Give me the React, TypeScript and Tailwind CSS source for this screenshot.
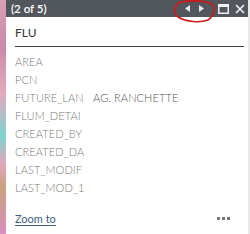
import React from "react";

const rows: [string, string][] = [
  ["AREA", ""],
  ["PCN", ""],
  ["FUTURE_LAN", "AG. RANCHETTE"],
  ["FLUM_DETAI", ""],
  ["CREATED_BY", ""],
  ["CREATED_DA", ""],
  ["LAST_MODIF", ""],
  ["LAST_MOD_1", ""],
];

export default function App() {
  return (
    <div className="relative flex w-[250px] h-[234px] overflow-hidden bg-[#e7b6c6]" style={{ fontFamily: "Lato, 'Open Sans', sans-serif" }}>
      <div className="w-[6px] h-full bg-[linear-gradient(180deg,#d9a0b6_0%,#c98aa8_20%,#e4a9bd_40%,#7fd4d0_58%,#e3a7bb_70%,#c9a27e_80%,#d98fc0_100%)]" />
      <div className="flex flex-col w-[242px] h-full bg-white">
        <div className="flex items-center h-[17px] bg-[#52565d] text-white pl-[5px] pr-[3px]">
          <span className="text-[11.5px] font-semibold leading-none">(2 of 5)</span>
          <div className="flex-1" />
          <svg width="9" height="9" viewBox="0 0 9 9" className="mr-[5px]"><path d="M7 1 L2 4.5 L7 8 Z" fill="#e8e8e8" /></svg>
          <svg width="9" height="9" viewBox="0 0 9 9" className="mr-[12px]"><path d="M2 1 L7 4.5 L2 8 Z" fill="#e8e8e8" /></svg>
          <svg width="11" height="10" viewBox="0 0 11 10" className="mr-[6px]"><rect x="0.75" y="0.75" width="9.5" height="8.5" fill="none" stroke="#f0f0f0" strokeWidth="1.5" /><rect x="0.5" y="0.5" width="10" height="2.5" fill="#f0f0f0" /></svg>
          <svg width="10" height="10" viewBox="0 0 10 10"><path d="M1 1 L9 9 M9 1 L1 9" stroke="#f0f0f0" strokeWidth="1.7" /></svg>
        </div>
        <div className="flex flex-col flex-1 pl-[9px] pr-[4px]">
          <div className="h-[30px] flex items-end pb-[7px] border-b border-[#3a3a3a] text-[12px] text-[#333] leading-none">FLU</div>
          <div className="flex flex-col pt-[5px]">
            {rows.map(([k, v]) => (
              <div key={k} className="flex h-[18px] items-center text-[11px] tracking-[0.1px] text-[#7a7a7a] font-light leading-none">
                <span className="w-[78px]">{k}</span>
                <span className="text-[#555]">{v}</span>
              </div>
            ))}
          </div>
          <div className="flex-1" />
          <div className="flex items-center justify-between h-[22px] mb-[5px] pr-[14px]">
            <span className="text-[11px] text-[#3d5d7d] underline underline-offset-2 leading-none">Zoom to</span>
            <span className="flex gap-[2px]">
              <span className="w-[3px] h-[3px] bg-[#777]" />
              <span className="w-[3px] h-[3px] bg-[#777]" />
              <span className="w-[3px] h-[3px] bg-[#777]" />
            </span>
          </div>
        </div>
      </div>
      <div className="w-[2px] h-full bg-[#e8e8e8]" />
      <svg className="absolute left-[172px] top-0" width="44" height="23" viewBox="0 0 44 23">
        <path d="M6 3 C 14 0, 32 0, 40 4 C 44 8, 42 16, 36 20 C 28 23, 14 22, 6 17 C 1 13, 2 6, 8 2" fill="none" stroke="#d01818" strokeWidth="1.6" />
      </svg>
    </div>
  );
}
